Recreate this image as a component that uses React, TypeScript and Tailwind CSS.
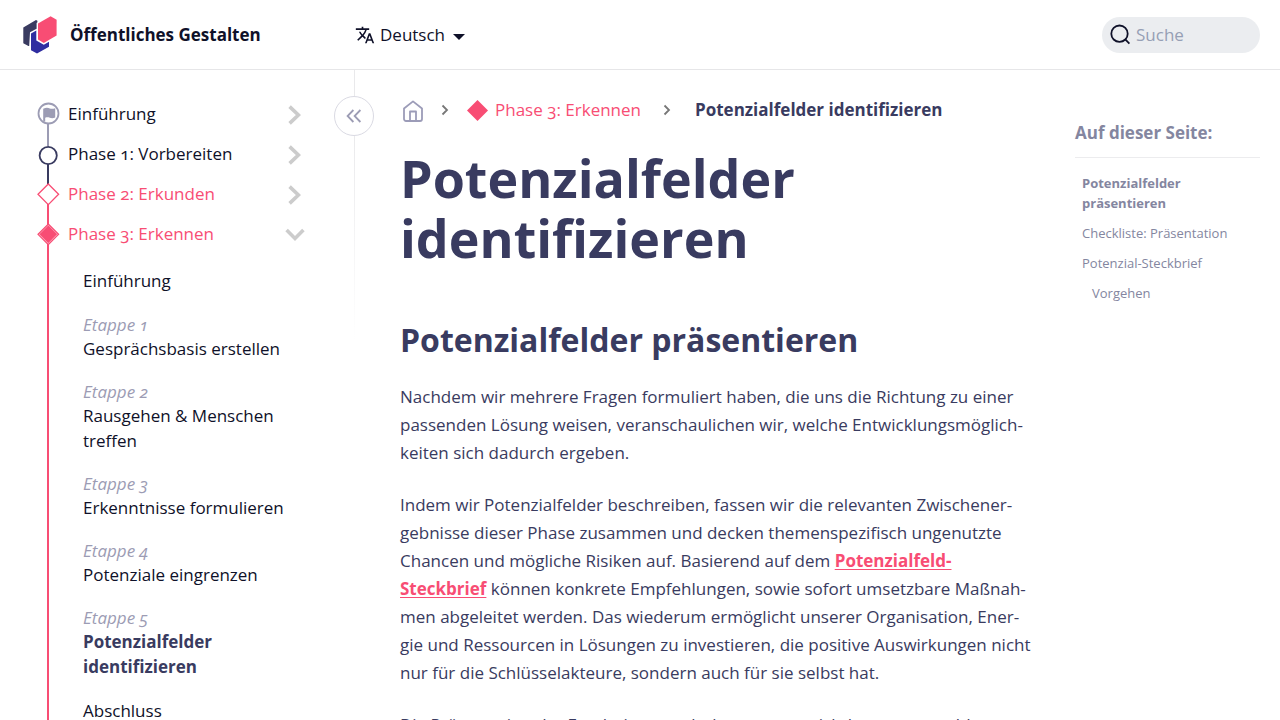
import type { ReactNode } from 'react';
import { MdTranslate } from 'react-icons/md';

type Step = { etappe?: string; title: string; active?: boolean };

const steps: Step[] = [
  { etappe: 'Etappe 1', title: 'Gesprächsbasis erstellen' },
  { etappe: 'Etappe 2', title: 'Rausgehen & Menschen treffen' },
  { etappe: 'Etappe 3', title: 'Erkenntnisse formulieren' },
  { etappe: 'Etappe 4', title: 'Potenziale eingrenzen' },
  { etappe: 'Etappe 5', title: 'Potenzialfelder identifizieren', active: true },
];

function Logo() {
  return (
    <svg width="34" height="38" viewBox="23 16 34 38" aria-hidden="true">
      <path d="M36 19.9 L37.4 20.7 V22.3 L36.6 23 V28.8 L30 32.2 L29.2 45.9 L28.4 46 L23.3 43.2 V27.4 Z" fill="#393b60" />
      <path d="M31 33.4 L36.3 30.6 V40.4 L43.8 44.8 L49 41.7 V46.7 L37 53.6 L31 50.2 Z" fill="#2f2da0" />
      <path d="M50.6 16.3 L56.6 19.7 V35.4 L43.8 43 L38 39.5 V23.4 Z" fill="#f84d74" />
    </svg>
  );
}

function ChevronRight() {
  return (
    <svg width="14" height="20" viewBox="0 0 14 20" fill="none" stroke="#cccccc" strokeWidth="3.6" aria-hidden="true">
      <path d="M1.6 1.6 L10.4 10 L1.6 18.4" />
    </svg>
  );
}

function ChevronDown() {
  return (
    <svg width="20" height="14" viewBox="0 0 20 14" fill="none" stroke="#cccccc" strokeWidth="3.6" aria-hidden="true">
      <path d="M1.6 2 L10 10.4 L18.4 2" />
    </svg>
  );
}

function CrumbArrow() {
  return (
    <svg width="8" height="12" viewBox="0 0 8 12" fill="none" stroke="#777777" strokeWidth="1.8" aria-hidden="true">
      <path d="M1.5 1.5 L6 6 L1.5 10.5" />
    </svg>
  );
}

function PhaseRow({ label, marker, color, open }: { label: string; marker: ReactNode; color: string; open?: boolean }) {
  return (
    <div className="flex h-10 items-center pl-9 pr-[49px]">
      <svg width="24" height="40" viewBox="0 0 24 40" fill="none" aria-hidden="true">
        {marker}
      </svg>
      <a href="#" className={`ml-2 flex-1 ${color}`}>
        {label}
      </a>
      <button type="button" aria-label={`${label} umschalten`} className="mt-[2px] flex h-5 w-5 items-center justify-center">
        {open ? <ChevronDown /> : <ChevronRight />}
      </button>
    </div>
  );
}

export default function App() {
  return (
    <div className="h-screen overflow-hidden bg-white font-['Open_Sans',sans-serif] text-[17px] leading-6 text-[#0f1129] oldstyle-nums">
      <header className="flex h-[70px] items-center border-b border-[#e6e6e8] pl-[23px] pr-5">
        <a href="#" className="flex w-[332px] items-center gap-[13px] font-bold">
          <Logo />
          <span>Öffentliches Gestalten</span>
        </a>
        <button type="button" className="flex items-center">
          <MdTranslate size={20} aria-hidden="true" />
          <span className="ml-[5px]">Deutsch</span>
          <svg width="12" height="6" viewBox="0 0 12 6" className="ml-2 mt-1" aria-hidden="true">
            <path d="M0 0 H12 L6 6 Z" fill="#0f1129" />
          </svg>
        </button>
        <label className="ml-auto flex h-9 w-[158px] items-center gap-[5px] rounded-full bg-[#ebedf0] pl-2 pr-3">
          <svg width="21" height="21" viewBox="0 0 21 21" fill="none" stroke="#0f1129" strokeWidth="1.8" aria-hidden="true">
            <circle cx="9.5" cy="9.7" r="8.2" />
            <path d="M15 15.2 L19.4 19.6" />
          </svg>
          <input type="search" aria-label="Suche" placeholder="Suche" className="min-w-0 flex-1 bg-transparent outline-none placeholder:text-[#969fb5]" />
        </label>
      </header>

      <div className="flex">
        <aside className="relative flex w-[355px] shrink-0">
          <nav aria-label="Phasen" className="min-w-0 flex-1 pt-6">
            <PhaseRow
              label="Einführung"
              color="text-[#0f1129]"
              marker={
                <>
                  <path d="M12 29 V40" stroke="#9c9cb4" strokeWidth="2" />
                  <circle cx="12.5" cy="19.5" r="10" stroke="#9c9cb4" strokeWidth="1.8" />
                  <path d="M7.2 27 V14.8 C10 13.2 12.2 13.6 13.8 14.4 C15.4 15.1 17 14.9 19.2 14.2 V23.6 C17 24.6 15.3 24.4 13.8 23.8 C12.2 23.2 10.8 23.2 9.2 23.8 V28 Z" fill="#9c9cb4" />
                </>
              }
            />
            <PhaseRow
              label="Phase 1: Vorbereiten"
              color="text-[#0f1129]"
              marker={
                <>
                  <path d="M12 0 V12" stroke="#9c9cb4" strokeWidth="2" />
                  <path d="M12 30 V40" stroke="#393b60" strokeWidth="2" />
                  <circle cx="12.2" cy="21.5" r="8.6" stroke="#393b60" strokeWidth="1.8" />
                </>
              }
            />
            <PhaseRow
              label="Phase 2: Erkunden"
              color="text-[#f84d74]"
              marker={
                <>
                  <path d="M12 0 V10" stroke="#393b60" strokeWidth="2" />
                  <path d="M12 30 V40" stroke="#f84d74" strokeWidth="2" />
                  <path d="M12.3 10 L22.6 20.3 L12.3 30.6 L2 20.3 Z" stroke="#f84d74" strokeWidth="1.3" />
                </>
              }
            />
            <PhaseRow
              label="Phase 3: Erkennen"
              color="text-[#f84d74]"
              open
              marker={
                <>
                  <path d="M12 0 V40" stroke="#f84d74" strokeWidth="2" />
                  <path d="M12.3 10 L22.6 20.3 L12.3 30.6 L2 20.3 Z" fill="#fbb4c4" stroke="#f84d74" strokeWidth="1.2" />
                  <path d="M12.3 11.6 L21 20.3 L12.3 29 L3.6 20.3 Z" fill="#f84d74" />
                </>
              }
            />
            <ol className="ml-[47px] border-l-2 border-[#f84d74] pb-10 pl-[34px] pr-16 pt-[14px] leading-[25px]">
              <li className="mb-5">
                <a href="#">Einführung</a>
              </li>
              {steps.map((s) => (
                <li key={s.title} className="mb-[19px]">
                  <span className="block leading-[23px] italic text-[#9c9cb4]">{s.etappe}</span>
                  <a href="#" className={s.active ? 'block font-bold text-[#393b60]' : 'block'}>
                    {s.title}
                  </a>
                </li>
              ))}
              <li>
                <a href="#">Abschluss</a>
              </li>
            </ol>
          </nav>
          <div className="h-[270px] w-px bg-linear-to-b from-[#e9e9eb] from-20% to-transparent" />
          <button
            type="button"
            aria-label="Seitenleiste einklappen"
            className="absolute -right-[19px] top-[26px] flex h-10 w-10 items-center justify-center rounded-full border border-[#dadae3] bg-white"
          >
            <svg width="16" height="14" viewBox="0 0 16 14" fill="none" stroke="#9c9cb4" strokeWidth="1.8" aria-hidden="true">
              <path d="M7.4 1 L1.6 7 L7.4 13 M14.4 1 L8.6 7 L14.4 13" />
            </svg>
          </button>
        </aside>

        <main className="min-w-0 flex-1 pl-[45px] pr-11 text-[#393b60]">
          <nav aria-label="Brotkrumen" className="mt-7 flex h-6 items-center whitespace-nowrap">
            <a href="#" aria-label="Startseite" className="ml-px mt-[2px]">
              <svg width="24" height="24" viewBox="0 0 24 24" fill="none" stroke="#9c9cb8" strokeWidth="1.8" strokeLinejoin="round" strokeLinecap="round" aria-hidden="true">
                <path d="M3 9.5 L12 2.4 L21 9.5 V20 a2 2 0 0 1 -2 2 H5 a2 2 0 0 1 -2 -2 Z" />
                <path d="M9 22 V12.5 H15 V22" />
              </svg>
            </a>
            <span className="ml-4">
              <CrumbArrow />
            </span>
            <a href="#" className="ml-[18px] flex items-center gap-[7px] text-[#f84d74]">
              <svg width="21" height="21" viewBox="0 0 21 21" aria-hidden="true">
                <path d="M10.5 0 L21 10.5 L10.5 21 L0 10.5 Z" fill="#f84d74" />
              </svg>
              Phase 3: Erkennen
            </a>
            <span className="ml-[22px]">
              <CrumbArrow />
            </span>
            <span className="ml-6 font-bold" aria-current="page">
              Potenzialfelder identifizieren
            </span>
          </nav>

          <h1 className="mt-[26px] text-[52px] font-bold leading-[60px]">Potenzialfelder identifizieren</h1>
          <h2 className="mt-[52px] text-[32px] font-bold leading-10">Potenzialfelder präsentieren</h2>

          <div className="mt-[23px] flex flex-col gap-6 leading-7">
            <p>
              Nachdem wir mehrere Fragen formuliert haben, die uns die Richtung zu einer passenden Lösung weisen,
              veranschaulichen wir, welche Entwicklungsmöglich&shy;keiten sich dadurch ergeben.
            </p>
            <p>
              Indem wir Potenzialfelder beschreiben, fassen wir die relevanten Zwischener&shy;gebnisse dieser Phase
              zusammen und decken themenspezifisch ungenutzte Chancen und mögliche Risiken auf. Basierend auf dem{' '}
              <a href="#" className="font-bold text-[#f84d74] underline underline-offset-2">
                Potenzialfeld-Steckbrief
              </a>{' '}
              können konkrete Empfehlungen, sowie sofort umsetzbare Maßnah&shy;men abgeleitet werden. Das wiederum
              ermöglicht unserer Organisation, Ener&shy;gie und Ressourcen in Lösungen zu investieren, die positive
              Auswirkungen nicht nur für die Schlüsselakteure, sondern auch für sie selbst hat.
            </p>
            <p>Die Präsentation der Ergebnisse macht konsequent sichtbar, wo neue Ideen</p>
          </div>
        </main>

        <aside className="w-[205px] shrink-0 pr-5 pt-[51px] text-[#8486a0]">
          <h2 className="border-b border-[#ececee] pb-3 font-bold">Auf dieser Seite:</h2>
          <ul className="flex flex-col gap-[10px] pl-[7px] pt-[15px] text-[13px] leading-5">
            <li>
              <a href="#" className="block w-32 font-bold">
                Potenzialfelder präsentieren
              </a>
            </li>
            <li>
              <a href="#">Checkliste: Präsentation</a>
            </li>
            <li>
              <a href="#">Potenzial-Steckbrief</a>
            </li>
            <li className="pl-[10px]">
              <a href="#">Vorgehen</a>
            </li>
          </ul>
        </aside>
      </div>
    </div>
  );
}
